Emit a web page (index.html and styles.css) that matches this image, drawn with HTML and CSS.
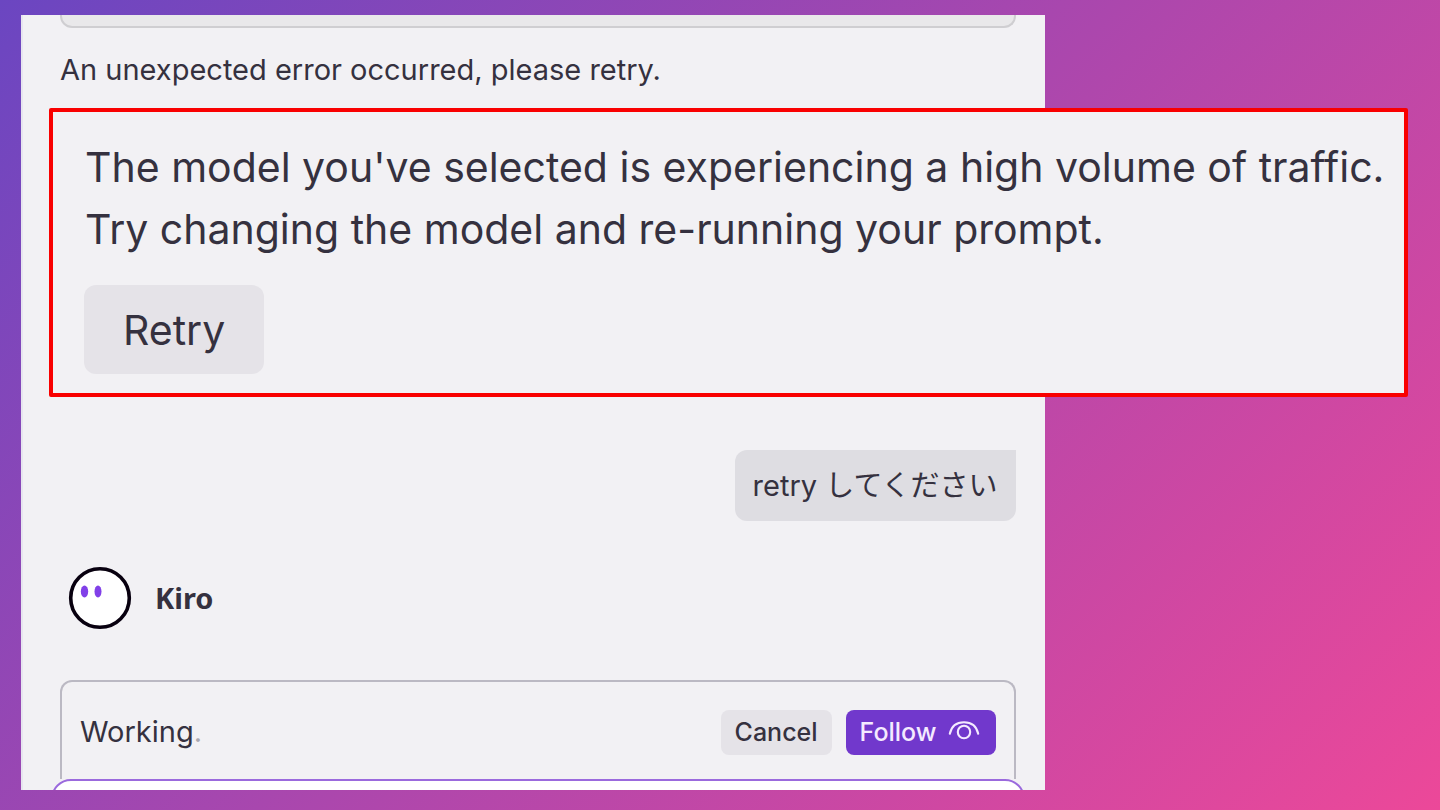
FILE: index.html
```html
<!DOCTYPE html>
<html lang="en">
<head>
<meta charset="utf-8">
<meta name="viewport" content="width=device-width, initial-scale=1">
<title>Kiro chat</title>
<link rel="stylesheet" href="styles.css">
</head>
<body>
<main class="panel">
  <div class="previous-card"></div>
  <p class="message">An unexpected error occurred, please retry.</p>
  <section class="callout">
    <p class="callout-text">The model you've selected is experiencing a high volume of traffic.<br>Try changing the model and re-running your prompt.</p>
    <button class="button button-large" type="button">Retry</button>
  </section>
  <p class="bubble">retry <span lang="ja">してください</span></p>
  <div class="author">
    <svg class="avatar" viewBox="0 0 64 64" aria-hidden="true">
      <circle cx="32" cy="32" r="29.3" fill="#fff" stroke="#08000f" stroke-width="3.6"/>
      <ellipse cx="16.5" cy="25.5" rx="3.7" ry="6" fill="#8140e8"/>
      <ellipse cx="30" cy="25.5" rx="3.5" ry="6" fill="#8140e8"/>
    </svg>
    <h2 class="author-name">Kiro</h2>
  </div>
  <section class="status">
    <p class="status-text">Working<span class="dot">.</span></p>
    <button class="button" type="button">Cancel</button>
    <button class="button button-primary" type="button">Follow
      <svg class="eye" viewBox="0 0 32 24" fill="none" stroke="currentColor" stroke-width="2.1" stroke-linecap="round" aria-hidden="true">
        <path d="M1.800 13.800C3.500 6 9 2.200 16 2.200s12.500 3.800 14.200 11.600"/>
        <circle cx="16" cy="12" r="6.200"/>
      </svg>
    </button>
  </section>
  <div class="composer"></div>
</main>
</body>
</html>
```
FILE: styles.css
```css
* {
  box-sizing: border-box;
}

body {
  min-height: 100vh;
  margin: 0;
  padding: 15px 0 20px 21px;
  display: flex;
  background: linear-gradient(135deg, #6b46c1, #ec4899);
  color: #35313f;
  font-family: Inter, "Noto Sans CJK JP", sans-serif;
  font-size: 29px;
  line-height: 36px;
}

p,
h2 {
  margin: 0;
}

.panel {
  display: flex;
  flex-direction: column;
  width: calc(72.2% - 1px);
  height: calc(100vh - 35px);
  padding: 0 29px 0 37px;
  border-left: 2px solid #e7e5ef;
  background: #f2f1f4;
  overflow-x: visible;
  overflow-y: clip;
}

.panel > * {
  flex-shrink: 0;
}

.previous-card {
  height: 13px;
  border: 2px solid #cfced1;
  border-top: 0;
  border-radius: 0 0 12px 12px;
  background: #e9e8ea;
}

.message {
  margin-top: 24px;
}

.callout {
  width: calc(100vw - 81px);
  margin: 20px 0 0 -11px;
  padding: 24px 16px 19px 31px;
  border: 4px solid #f90000;
  border-radius: 2px;
  background: #f2f1f4;
}

.callout-text {
  padding-left: 1px;
  font-size: 41px;
  line-height: 62px;
}

.button {
  height: 45px;
  padding: 0 14px;
  border: 0;
  border-radius: 8px;
  background: #e5e3e8;
  color: inherit;
  font-family: inherit;
  font-size: 25px;
  font-weight: 500;
}

.button-large {
  display: block;
  height: 89px;
  margin-top: 25px;
  padding: 0 39px;
  border-radius: 12px;
  font-size: 41px;
  font-weight: 400;
}

.bubble {
  align-self: flex-end;
  margin-top: 53px;
  padding: 18px 18px 17px;
  border-radius: 12px 0 12px 12px;
  background: #dedde2;
}

.author {
  display: flex;
  align-items: center;
  gap: 23px;
  margin: 45px 0 50px 8px;
}

.avatar {
  width: 64px;
  height: 64px;
}

.author-name {
  font-family: "Noto Sans", sans-serif;
  font-size: 29px;
  font-weight: 700;
}

.status {
  display: flex;
  align-items: center;
  gap: 14px;
  height: 99px;
  padding: 3px 18px 0;
  border: 2px solid #bbb9c3;
  border-bottom: 0;
  border-radius: 12px 12px 0 0;
}

.status-text {
  flex: 1;
}

.dot {
  color: #aaa8b0;
}

.button-primary {
  display: flex;
  align-items: center;
  gap: 11px;
  padding-right: 16px;
  background: #7138cc;
  color: #f4eaff;
}

.eye {
  width: 32px;
  height: 24px;
}

.composer {
  height: 60px;
  margin: 0 -9px;
  border: 2px solid #9b6add;
  border-radius: 20px;
  background: #fff;
}
```
